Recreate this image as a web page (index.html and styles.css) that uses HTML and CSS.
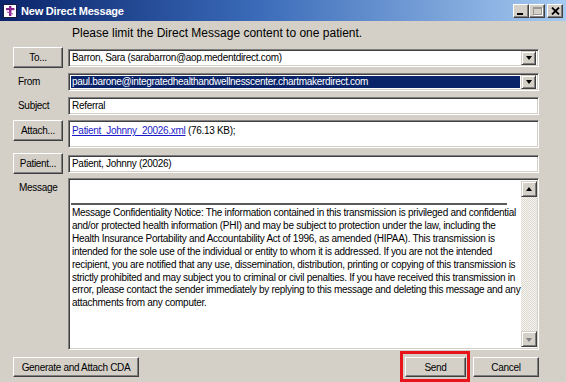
FILE: index.html
```html
<!DOCTYPE html>
<html>
<head>
<meta charset="utf-8">
<link rel="stylesheet" href="styles.css">
</head>
<body>
<div class="window">
  <div class="titlebar">
    <svg class="app-icon" width="14" height="14" viewBox="0 0 14 14">
      <rect x="0.5" y="0.5" width="13" height="13" fill="#ffffff" stroke="#1a1a40"/>
      <rect x="6" y="2" width="2.4" height="10" fill="#8a1f8e"/>
      <rect x="3" y="4" width="8.4" height="2.2" fill="#8a1f8e"/>
      <path d="M4 8 L10 10" stroke="#b04ab5" stroke-width="1"/>
    </svg>
    <span class="title">New Direct Message</span>
    <div class="caption-buttons">
      <div class="cap-btn"><span class="cap-min"></span></div>
      <div class="cap-btn"><span class="cap-max"></span></div>
      <div class="cap-btn cap-close">
        <svg width="9" height="8" viewBox="0 0 9 8"><path d="M1 0.5 L8 7.5 M8 0.5 L1 7.5" stroke="#000" stroke-width="1.8"/></svg>
      </div>
    </div>
  </div>
  <div class="content">
    <div class="intro">Please limit the Direct Message content to one patient.</div>
    <div class="row row-to">
      <div class="btn side-btn">To...</div>
      <div class="field combo">
        <span class="field-text">Barron, Sara (sarabarron@aop.medentdirect.com)</span>
        <div class="drop-btn"><span class="tri-down"></span></div>
      </div>
    </div>
    <div class="row row-gap3">
      <div class="label">From</div>
      <div class="field combo">
        <span class="field-text selected">paul.barone@integratedhealthandwellnesscenter.chartmakerdirect.com</span>
        <div class="drop-btn"><span class="tri-down"></span></div>
      </div>
    </div>
    <div class="row row-gap3">
      <div class="label">Subject</div>
      <div class="field"><span class="field-text">Referral</span></div>
    </div>
    <div class="row row-attach">
      <div class="btn side-btn">Attach...</div>
      <div class="field attach-box"><span class="field-text"><span class="link">Patient_Johnny_20026.xml</span> (76.13 KB);</span></div>
    </div>
    <div class="row row-patient">
      <div class="btn side-btn">Patient...</div>
      <div class="field"><span class="field-text">Patient, Johnny (20026)</span></div>
    </div>
    <div class="row row-message">
      <div class="label label-top">Message</div>
      <div class="field message-box">
        <div class="message-body">
          <div class="compose-area"></div>
          <div class="notice">Message Confidentiality Notice: The information contained in this transmission is privileged and confidential<br>and/or protected health information (PHI) and may be subject to protection under the law, including the<br>Health Insurance Portability and Accountability Act of 1996, as amended (HIPAA). This transmission is<br>intended for the sole use of the individual or entity to whom it is addressed. If you are not the intended<br>recipient, you are notified that any use, dissemination, distribution, printing or copying of this transmission is<br>strictly prohibited and may subject you to criminal or civil penalties. If you have received this transmission in<br>error, please contact the sender immediately by replying to this message and deleting this message and any<br>attachments from any computer.</div>
        </div>
        <div class="scrollbar">
          <div class="sb-btn"><span class="tri-up"></span></div>
          <div class="sb-track"></div>
          <div class="sb-btn"><span class="tri-down grey"></span></div>
        </div>
      </div>
    </div>
    <div class="footer">
      <div class="btn cda-btn">Generate and Attach CDA</div>
      <div class="spacer"></div>
      <div class="btn send-btn">Send</div>
      <div class="btn cancel-btn">Cancel</div>
    </div>
  </div>
</div>
</body>
</html>
```

FILE: styles.css
```css
* { box-sizing: border-box; }
html, body { margin: 0; padding: 0; }
body {
  width: 566px;
  height: 382px;
  overflow: hidden;
  background: #d4d0c8;
  font-family: "Liberation Sans", Arial, sans-serif;
  font-size: 10px;
  letter-spacing: -0.3px;
  color: #000;
}
.window {
  width: 566px;
  height: 382px;
  background: #d4d0c8;
  display: flex;
  flex-direction: column;
}
.titlebar {
  height: 21px;
  flex: none;
  display: flex;
  align-items: center;
  padding: 0 3px 0 3px;
  background: linear-gradient(to right, #0a246a 0%, #3a6ab8 45%, #a6caf0 100%);
}
.app-icon { flex: none; margin-right: 4px; }
.title {
  color: #fff;
  font-weight: bold;
  font-size: 11px;
  letter-spacing: -0.2px;
  flex: 1;
}
.caption-buttons { display: flex; align-items: center; }
.cap-btn {
  width: 16px;
  height: 14px;
  background: #d4d0c8;
  border: 1px solid;
  border-color: #fff #404040 #404040 #fff;
  box-shadow: inset -1px -1px #808080;
  display: flex;
  align-items: center;
  justify-content: center;
}
.cap-close { margin-left: 2px; }
.cap-min {
  width: 6px; height: 2px; background: #000;
  margin-top: 6px; margin-left: -2px;
}
.cap-max {
  width: 9px; height: 8px;
  border: 1px solid #9a9890;
  border-top-width: 2px;
  box-shadow: 1px 1px #fff;
}
.content {
  flex: 1;
  padding: 0 27px 0 13px;
  display: flex;
  flex-direction: column;
}
.intro {
  height: 26px;
  padding: 5px 0 0 59px;
  font-size: 12px;
  letter-spacing: 0;
  line-height: 15px;
}
.row {
  display: flex;
  align-items: center;
  gap: 5px;
  height: 21px;
}
.row-gap3 { margin-top: 3px; }
.row-attach { margin-top: 4px; height: 28px; align-items: flex-start; }
.row-patient { margin-top: 5px; }
.row-message { margin-top: 4px; height: 172px; align-items: flex-start; }
.btn {
  background: #d4d0c8;
  border: 1px solid;
  border-color: #fff #404040 #404040 #fff;
  box-shadow: inset -1px -1px #808080;
  display: flex;
  align-items: center;
  justify-content: center;
  height: 21px;
  flex: none;
  white-space: nowrap;
}
.side-btn { width: 50px; }
.label {
  width: 50px;
  flex: none;
  padding-left: 5px;
}
.label-top { padding-top: 4px; padding-left: 6px; }
.field {
  width: 471px;
  flex: none;
  height: 18px;
  background: #fff;
  border: 1px solid;
  border-color: #808080 #fff #fff #808080;
  box-shadow: inset 1px 1px #404040, inset -1px -1px #d4d0c8;
  display: flex;
  align-items: center;
  padding: 2px;
  min-width: 0;
}
.field-text {
  flex: 1;
  min-width: 0;
  padding-left: 1px;
  white-space: nowrap;
  overflow: hidden;
  line-height: 13px;
}
.field-text.selected {
  background: #0a246a;
  color: #fff;
  align-self: stretch;
  display: flex;
  align-items: center;
  margin-right: 1px;
}
.combo { padding-right: 2px; }
.drop-btn {
  width: 15px;
  height: 14px;
  flex: none;
  background: #d4d0c8;
  border: 1px solid;
  border-color: #d4d0c8 #404040 #404040 #d4d0c8;
  box-shadow: inset 1px 1px #fff, inset -1px -1px #808080;
  display: flex;
  align-items: center;
  justify-content: center;
}
.tri-down {
  width: 0; height: 0;
  border-left: 3.5px solid transparent;
  border-right: 3.5px solid transparent;
  border-top: 4px solid #000;
  margin-top: 1px;
}
.tri-down.grey { border-top-color: #808080; }
.tri-up {
  width: 0; height: 0;
  border-left: 3.5px solid transparent;
  border-right: 3.5px solid transparent;
  border-bottom: 4px solid #000;
  margin-bottom: 1px;
}
.attach-box {
  height: 28px;
  align-items: flex-start;
  padding-top: 3px;
}
.link {
  color: #1a1ac8;
  text-decoration: underline;
}
.message-box {
  height: 172px;
  align-items: stretch;
  padding: 2px 1px 2px 2px;
}
.message-body {
  flex: 1;
  min-width: 0;
  overflow: hidden;
  display: flex;
  flex-direction: column;
  padding-right: 14px;
}
.compose-area {
  height: 24px;
  border-bottom: 2px solid #5a5a5a;
  flex: none;
}
.notice {
  padding: 2px 0 0 1px;
  font-size: 10px;
  line-height: 12.9px;
  white-space: nowrap;
  letter-spacing: -0.28px;
}
.scrollbar {
  width: 16px;
  flex: none;
  display: flex;
  flex-direction: column;
}
.sb-btn {
  width: 16px;
  height: 16px;
  flex: none;
  background: #d4d0c8;
  border: 1px solid;
  border-color: #d4d0c8 #404040 #404040 #d4d0c8;
  box-shadow: inset 1px 1px #fff, inset -1px -1px #808080;
  display: flex;
  align-items: center;
  justify-content: center;
}
.sb-track {
  flex: 1;
  background-color: #ebe9e4;
  background-image: repeating-conic-gradient(#f4f3ee 0 25%, #dcdad3 0 50%);
  background-size: 2px 2px;
}
.footer {
  margin-top: 7px;
  display: flex;
  height: 20px;
}
.cda-btn { width: 126px; height: 20px; }
.spacer { flex: 1; }
.send-btn { width: 61px; height: 20px; position: relative; }
.send-btn::after {
  content: "";
  position: absolute;
  left: -6px;
  right: -5px;
  top: -7px;
  bottom: -6px;
  border: 3px solid #e8141c;
}
.cancel-btn { width: 66px; height: 20px; margin-left: 7px; }
```
